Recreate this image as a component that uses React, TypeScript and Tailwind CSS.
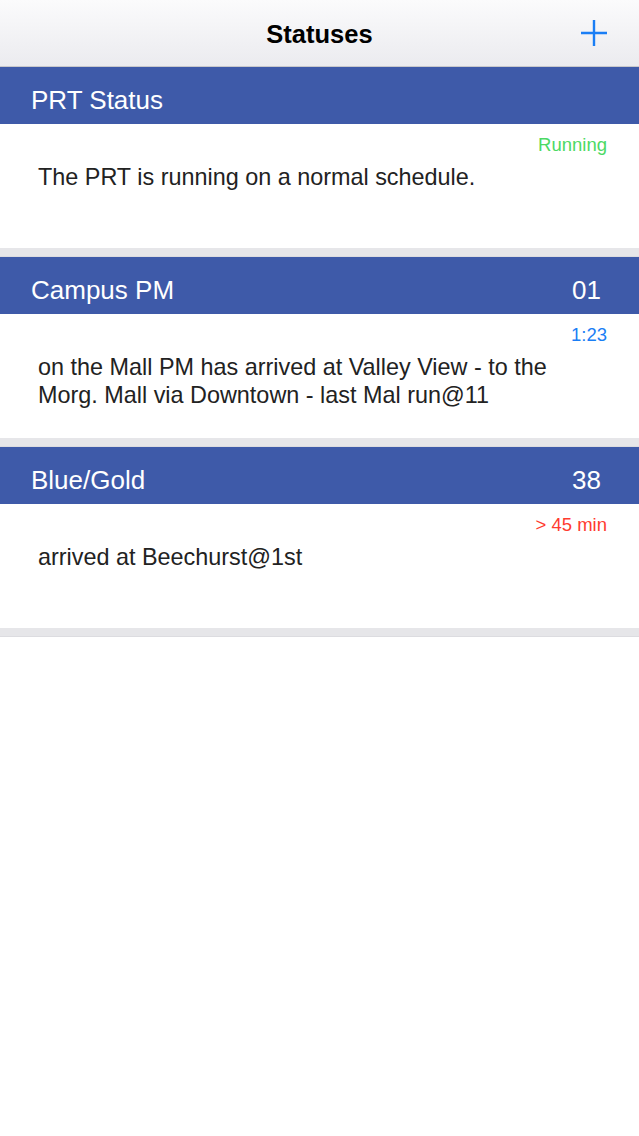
import React from 'react';

type Tone = 'green' | 'blue' | 'red';

type Status = {
  id: string;
  title: string;
  number?: string;
  label: string;
  tone: Tone;
  message: string;
};

const TONES: Record<Tone, string> = {
  green: 'text-[#4cd964]',
  blue: 'text-[#1a7ef5]',
  red: 'text-[#ff3b30]',
};

const statuses: Status[] = [
  {
    id: 'prt',
    title: 'PRT Status',
    label: 'Running',
    tone: 'green',
    message: 'The PRT is running on a normal schedule.',
  },
  {
    id: 'campus-pm',
    title: 'Campus PM',
    number: '01',
    label: '1:23',
    tone: 'blue',
    message: 'on the Mall PM has arrived at Valley View - to the Morg. Mall via Downtown - last Mal run@11',
  },
  {
    id: 'blue-gold',
    title: 'Blue/Gold',
    number: '38',
    label: '> 45 min',
    tone: 'red',
    message: 'arrived at Beechurst@1st',
  },
];

function PlusIcon() {
  return (
    <svg width="28" height="28" viewBox="0 0 28 28" fill="none" aria-hidden>
      <path d="M14 1v26M1 14h26" stroke="#1a7ef5" strokeWidth="2.4" />
    </svg>
  );
}

export default function App() {
  return (
    <div className="min-h-[1136px] w-[639px] bg-white font-['Liberation_Sans',Arial,sans-serif]">
      <header className="relative flex h-[67px] items-center justify-center border-b border-[#c8c8cc] bg-gradient-to-b from-[#fbfbfc] to-[#ebebef] pt-[2px]">
        <h1 className="text-[25.5px] font-bold text-black">Statuses</h1>
        <button className="absolute right-[31px] top-[19px]" aria-label="Add status">
          <PlusIcon />
        </button>
      </header>

      {statuses.map((status) => (
        <section key={status.id}>
          <div className="flex h-[57px] items-center justify-between bg-[#3e5aa9] pl-[31px] pr-[38px] pt-[10px] text-[26px] text-white">
            <span>{status.title}</span>
            {status.number && <span>{status.number}</span>}
          </div>
          <div className="h-[124px] bg-white px-[32px] pt-[11px]">
            <p className={`text-right text-[18.5px] leading-[20px] ${TONES[status.tone]}`}>
              {status.label}
            </p>
            <p className="mt-[8px] pl-[6px] pr-[20px] text-[23.4px] leading-[28px] text-[#222]">
              {status.message}
            </p>
          </div>
          <div className="h-[9px] border-b border-[#dcdce0] bg-[#e6e6e9]" />
        </section>
      ))}
    </div>
  );
}
